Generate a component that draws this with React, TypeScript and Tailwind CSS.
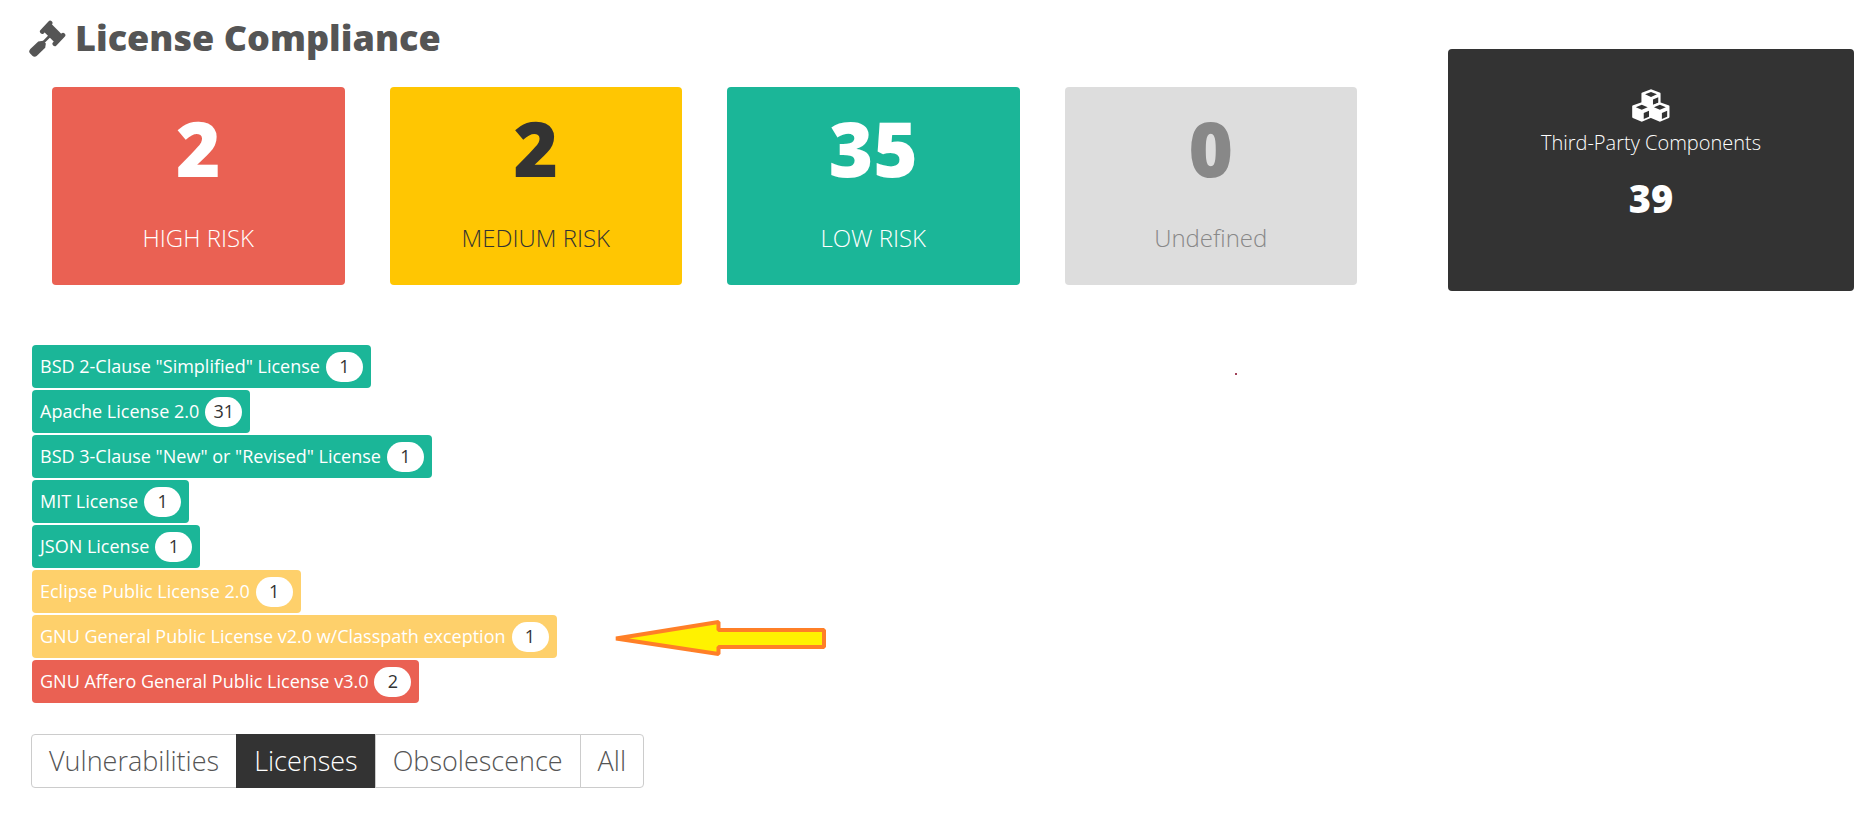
import clsx from "clsx";

type Risk = "high" | "medium" | "low" | "undefined";

const riskCards: { risk: Risk; count: number; label: string }[] = [
    { risk: "high", count: 2, label: "HIGH RISK" },
    { risk: "medium", count: 2, label: "MEDIUM RISK" },
    { risk: "low", count: 35, label: "LOW RISK" },
    { risk: "undefined", count: 0, label: "Undefined" },
];

const licenses: {
    name: string;
    count: number;
    risk: Risk;
    highlighted?: boolean;
}[] = [
    { name: 'BSD 2-Clause "Simplified" License', count: 1, risk: "low" },
    { name: "Apache License 2.0", count: 31, risk: "low" },
    { name: 'BSD 3-Clause "New" or "Revised" License', count: 1, risk: "low" },
    { name: "MIT License", count: 1, risk: "low" },
    { name: "JSON License", count: 1, risk: "low" },
    { name: "Eclipse Public License 2.0", count: 1, risk: "medium" },
    {
        name: "GNU General Public License v2.0 w/Classpath exception",
        count: 1,
        risk: "medium",
        highlighted: true,
    },
    { name: "GNU Affero General Public License v3.0", count: 2, risk: "high" },
];

const tabs = ["Vulnerabilities", "Licenses", "Obsolescence", "All"];

const cardColors: Record<Risk, string> = {
    high: "bg-[#ea6153] text-white",
    medium: "bg-[#ffc602] text-[#333333]",
    low: "bg-[#1bb698] text-white",
    undefined: "bg-[#dddddd] text-[#888888]",
};

const chipColors: Record<Risk, string> = {
    high: "bg-[#ea6153]",
    medium: "bg-[#fed06b]",
    low: "bg-[#1bb698]",
    undefined: "bg-[#dddddd]",
};

const GavelIcon = () => (
    <svg
        viewBox="27 26 112 112"
        className="size-[37px]"
        fill="none"
        stroke="currentColor"
        strokeLinecap="round"
        aria-hidden="true"
    >
        <path
            d="M93 36 129 72 107 96 70 59Z"
            fill="currentColor"
            stroke="none"
        />
        <path d="M91 35 67 61M130 72 105 98" strokeWidth="14" />
        <path d="M88 76 68 96" strokeWidth="8" />
        <path
            d="M55 91 70 89 78 97 76 110 51 134Q44 140 37 134L30 127Q25 121 31 114Z"
            fill="currentColor"
            stroke="none"
        />
    </svg>
);

const CubesIcon = () => (
    <svg viewBox="0 0 114 100" className="h-[33px] w-[38px]" aria-hidden="true">
        <defs>
            <path
                id="cube"
                fillRule="evenodd"
                d="M29 1 57 11Q58 12 58 14V46Q58 48 56 49L29 60 2 49Q0 48 0 46V14Q0 12 1 11ZM29 9 11 16 29 24 47 16ZM35 34V52L51 45V27Z"
            />
        </defs>
        <g fill="currentColor">
            <use href="#cube" x="0" y="39" />
            <use href="#cube" x="55" y="39" />
            {/* the upper cube is cut short where the lower two meet it */}
            <path
                fillRule="evenodd"
                d="M57 1 85 11Q86 12 86 14V42L57 54 28 42V14Q28 12 29 11ZM57 9 39 16 57 24 75 16ZM63 32V49L79 42V25Z"
            />
        </g>
    </svg>
);

const RiskCard = ({
    risk,
    count,
    label,
}: {
    risk: Risk;
    count: number;
    label: string;
}) => (
    <div
        className={clsx(
            "flex h-[198px] flex-1 flex-col items-center rounded pt-5",
            cardColors[risk]
        )}
    >
        <strong className="text-[76px] leading-[82px] font-extrabold">
            {count}
        </strong>
        <span className="mt-7 text-[24px] leading-[42px] font-light">
            {label}
        </span>
    </div>
);

const Arrow = () => (
    <svg
        width="213"
        height="38"
        viewBox="0 0 213 38"
        className="ml-14 shrink-0"
        aria-hidden="true"
    >
        <path
            d="M3 20.500 L105.500 4 V12 H211 V29 H105.500 V36 Z"
            fill="#fff200"
            stroke="#ff7f27"
            strokeWidth="4"
            strokeLinejoin="bevel"
        />
    </svg>
);

export default function App() {
    return (
        <main className="bg-white pt-[13px] pr-[7px] pb-7 pl-[29px] font-['Open_Sans',sans-serif]">
            <div className="flex items-start">
                <section className="flex-1">
                    <h1 className="flex items-center gap-[9px] text-[36px] leading-[50px] font-extrabold text-[#555555]">
                        <GavelIcon />
                        License Compliance
                    </h1>
                    <div className="mt-6 flex gap-[45px] pr-[91px] pl-[23px]">
                        {riskCards.map((card) => (
                            <RiskCard key={card.risk} {...card} />
                        ))}
                    </div>
                </section>
                <aside className="mt-9 flex h-[242px] w-[406px] shrink-0 flex-col items-center rounded bg-[#333333] pt-10 text-white">
                    <CubesIcon />
                    <span className="mt-[7px] text-[20px] leading-7 font-light">
                        Third-Party Components
                    </span>
                    <strong className="mt-4 text-[38px] leading-[50px] font-extrabold">
                        39
                    </strong>
                </aside>
            </div>

            <div className="relative mt-[54px] ml-[3px]">
                <ul className="flex flex-col gap-[2px]">
                    {licenses.map(({ name, count, risk, highlighted }) => (
                        <li key={name} className="flex items-center">
                            <span
                                className={clsx(
                                    "flex h-[43px] items-center gap-[6px] rounded px-2 text-[18px] text-white",
                                    chipColors[risk]
                                )}
                            >
                                {name}
                                <span className="flex h-[30px] min-w-[37px] items-center justify-center rounded-full bg-white px-2 text-[#333333]">
                                    {count}
                                </span>
                            </span>
                            {highlighted && <Arrow />}
                        </li>
                    ))}
                </ul>
                <span className="absolute top-7 left-[66%] size-[2px] bg-[#a04058]" />
            </div>

            <nav className="mt-[31px] ml-[2px] flex">
                {tabs.map((tab) => (
                    <button
                        key={tab}
                        type="button"
                        className={clsx(
                            "-ml-px h-[54px] border px-[17px] text-[27px] font-light first:ml-0 first:rounded-l-sm last:rounded-r-sm",
                            tab === "Licenses"
                                ? "border-[#333333] bg-[#333333] text-white"
                                : "border-[#cccccc] bg-white text-[#555555]"
                        )}
                    >
                        {tab}
                    </button>
                ))}
            </nav>
        </main>
    );
}
